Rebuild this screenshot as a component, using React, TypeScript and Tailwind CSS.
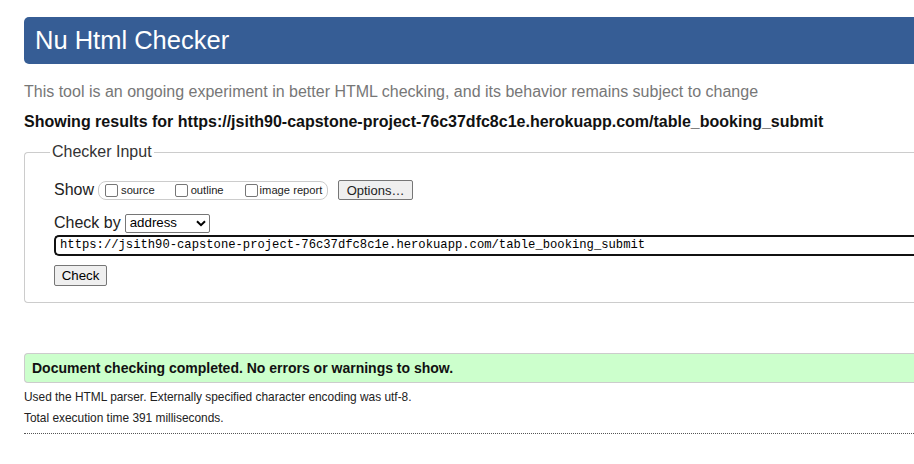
import React from "react";

const Box = () => (
  <span className="inline-block w-[13px] h-[13px] border border-[#767676] rounded-[2px] bg-white align-middle" />
);

export default function App() {
  return (
    <div className="w-[914px] h-[464px] overflow-hidden bg-white font-['Liberation_Sans',Arial,sans-serif] text-[#222]">
      <div className="w-[1000px] pl-[24px] pt-[17px]">
        <div className="h-[47px] bg-[#365d95] rounded-l-[5px] flex items-center pl-[11px]">
          <h1 className="text-white text-[25.5px] leading-none">Nu Html Checker</h1>
        </div>
        <p className="text-[16px] text-[#777] mt-[19px] leading-[18px]">
          This tool is an ongoing experiment in better HTML checking, and its behavior remains subject to change
        </p>
        <p className="text-[16px] font-bold text-[#111] mt-[12px] leading-[18px]">
          Showing results for https://jsith90-capstone-project-76c37dfc8c1e.herokuapp.com/table_booking_submit
        </p>
        <fieldset className="mt-[12px] border border-[#ccc] border-r-0 rounded-l-[4px] pl-[29px] pt-[8px] h-[160px]">
          <legend className="text-[16px] text-[#333] px-[2px] ml-[-4px] leading-[18px]">Checker Input</legend>
          <div className="flex items-center h-[22px] mt-[10px]">
            <span className="text-[16px] mr-[4px]">Show</span>
            <span className="flex items-center h-[19px] w-[230px] border border-[#ccc] rounded-[8px] pl-[6px] text-[11.2px] text-[#222]">
              <Box />
              <span className="ml-[3px] mr-[20px]">source</span>
              <Box />
              <span className="ml-[3px] mr-[21px]">outline</span>
              <Box />
              <span className="ml-[2px]">image report</span>
            </span>
            <button className="ml-[10px] h-[20px] w-[75px] border border-[#767676] bg-[#efefef] rounded-[2px] text-[13px] leading-none">
              Options…
            </button>
          </div>
          <div className="flex items-center h-[20px] mt-[12px]">
            <span className="text-[16px] mr-[4px]">Check by</span>
            <span className="h-[19px] w-[85px] border border-[#767676] rounded-[2px] flex items-center justify-between pl-[4px] pr-[3px] text-[13.3px] text-black">
              <span>address</span>
              <svg width="10" height="7" viewBox="0 0 10 7"><path d="M1 1.2 L5 5.2 L9 1.2" stroke="#000" strokeWidth="2" fill="none" /></svg>
            </span>
          </div>
          <div className="mt-[2px] h-[21px] border-2 border-[#111] border-r-0 rounded-l-[5px] flex items-center pl-[4px] font-['Liberation_Mono',monospace] text-[12.2px] text-black">
            https://jsith90-capstone-project-76c37dfc8c1e.herokuapp.com/table_booking_submit
          </div>
          <button className="mt-[9px] h-[21px] w-[53px] border border-[#767676] bg-[#efefef] rounded-[2px] text-[13.3px] leading-none text-black">
            Check
          </button>
        </fieldset>
        <div className="mt-[50px] h-[30px] bg-[#ccffcc] border border-[#ccc] border-r-0 rounded-l-[4px] flex items-center pl-[7px]">
          <span className="font-bold text-[14px] text-[#111]">Document checking completed. No errors or warnings to show.</span>
        </div>
        <p className="text-[11.9px] text-[#222] mt-[7px] leading-[14px]">
          Used the HTML parser. Externally specified character encoding was utf-8.
        </p>
        <p className="text-[11.9px] text-[#222] mt-[7px] leading-[14px]">Total execution time 391 milliseconds.</p>
        <div className="mt-[8px] border-t border-dotted border-[#555]" />
      </div>
    </div>
  );
}
